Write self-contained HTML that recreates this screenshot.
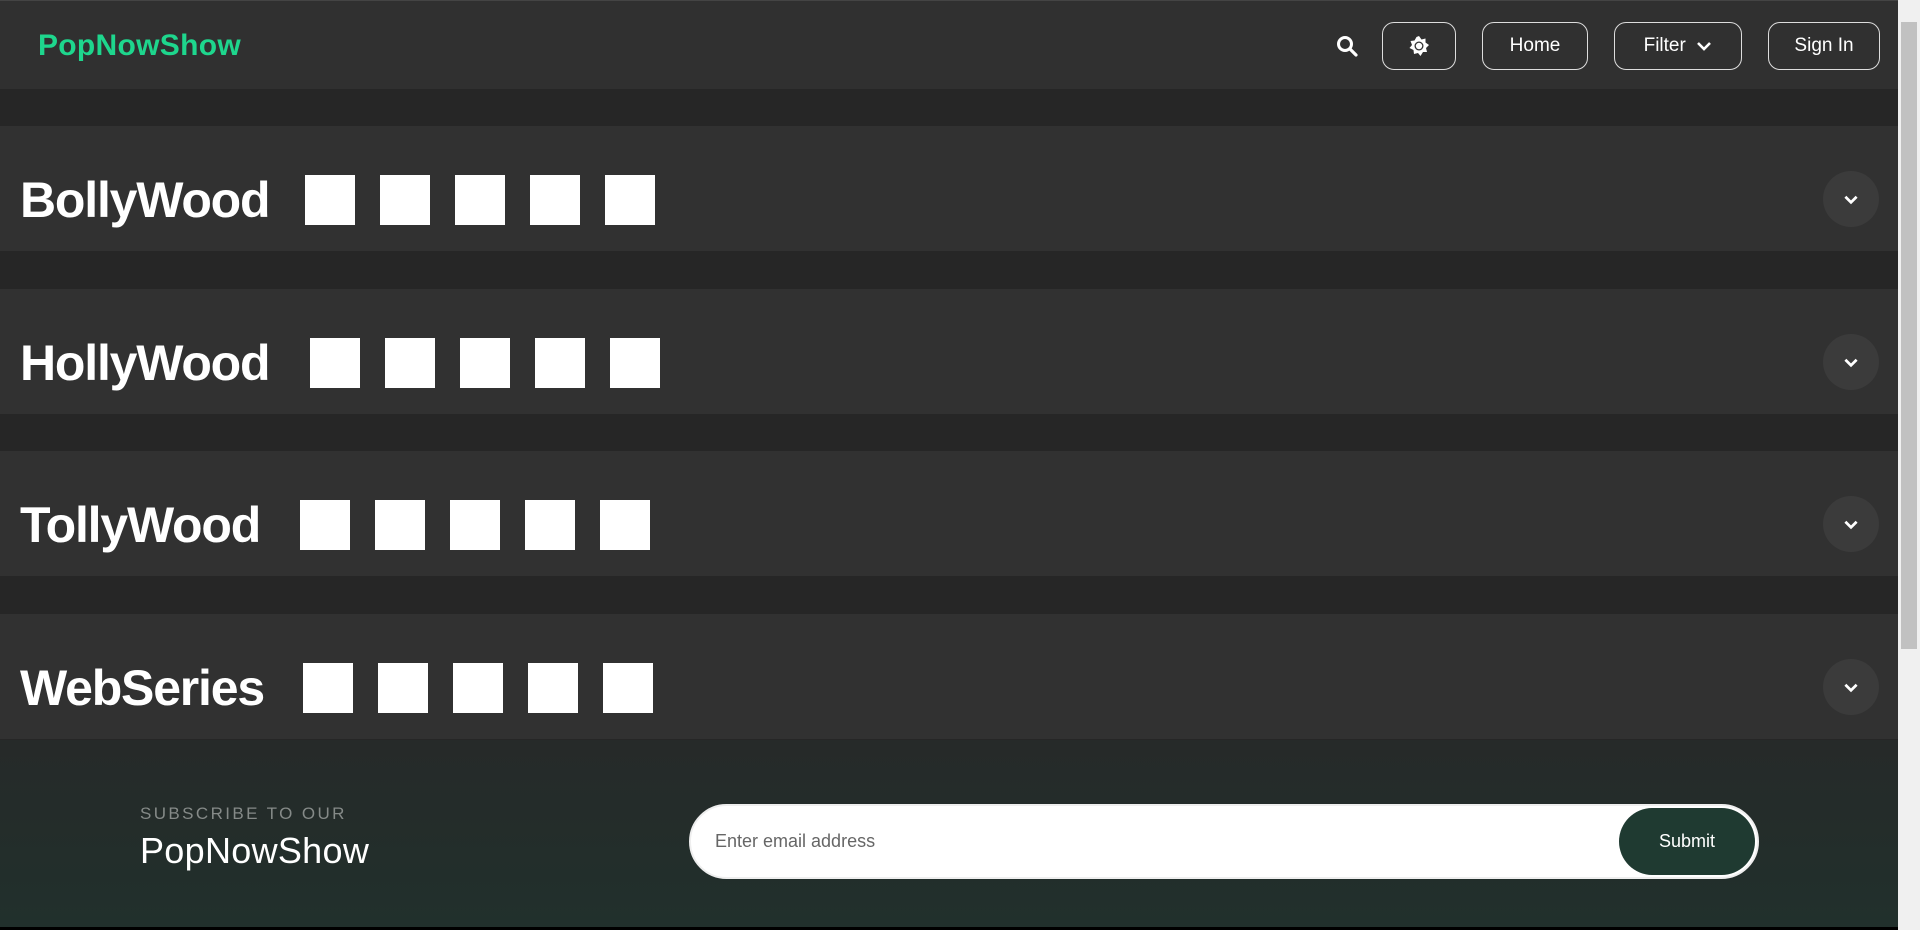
<!DOCTYPE html>
<html><head><style>
*{box-sizing:border-box;margin:0;padding:0}
body{width:1920px;height:930px;overflow:hidden;background:#262626;font-family:"Liberation Sans",sans-serif;position:relative;color:#fff}
.hdr{position:absolute;left:0;top:0;width:1898px;height:89px;background:#303030;border-top:1px solid #444}
.logo{position:absolute;left:38px;top:28px;font-size:30px;font-weight:bold;color:#1ed68d;letter-spacing:0.3px}
.btn{position:absolute;top:21px;height:48px;border:1.5px solid #ddd;border-radius:12px;display:flex;align-items:center;justify-content:center;font-size:19px;color:#fff}
.sec{position:absolute;left:0;width:1898px;height:125px;background:#313131}
.sec h2{position:absolute;left:20px;top:45px;font-size:50px;font-weight:bold;letter-spacing:-1.2px}
.sq{position:absolute;top:49px;width:50px;height:50px;background:#fff}
.chev{position:absolute;left:1823px;top:45px;width:56px;height:56px;border-radius:50%;background:#3b3b3b;display:flex;align-items:center;justify-content:center}
.foot{position:absolute;left:0;top:740px;width:1898px;height:187px;background:linear-gradient(180deg,#262a29,#21302c)}
.sb{position:absolute;left:1898px;top:0;width:22px;height:930px;background:#f0f0f0}
</style></head><body>
<div class="hdr">
<div class="logo">PopNowShow</div>
<svg style="position:absolute;left:1336px;top:34px" width="22" height="22" viewBox="0 0 22 22"><circle cx="9" cy="9" r="6.5" fill="none" stroke="#fff" stroke-width="3"/><line x1="14" y1="14" x2="20" y2="20" stroke="#fff" stroke-width="3.2" stroke-linecap="round"/></svg>
<div class="btn" style="left:1382px;width:74px"><svg width="22" height="22" viewBox="0 0 22 22"><polygon fill="#fff" points="11,1 13.5,4.5 17.5,3.5 17.5,7.5 21,10 18,13 19,17 15,17 12.5,21 10,18 6,19 5.5,15 1.5,13 4,10 2.5,6 6.5,5.5 8.5,2"/><circle cx="11" cy="11" r="4.5" fill="#303030"/><circle cx="11" cy="11" r="3.2" fill="#fff"/></svg></div>
<div class="btn" style="left:1482px;width:106px">Home</div>
<div class="btn" style="left:1614px;width:128px">Filter&nbsp;&nbsp;<svg width="16" height="12" viewBox="0 0 16 12"><path d="M2 3l6 6 6-6" fill="none" stroke="#fff" stroke-width="2.6"/></svg></div>
<div class="btn" style="left:1768px;width:112px">Sign In</div>
</div>

<div class="sec" style="top:126px"><h2>BollyWood</h2>
<div class="sq" style="left:305px"></div><div class="sq" style="left:380px"></div><div class="sq" style="left:455px"></div><div class="sq" style="left:530px"></div><div class="sq" style="left:605px"></div>
<div class="chev"><svg width="18" height="14" viewBox="0 0 16 12"><path d="M3 4l5 5 5-5" fill="none" stroke="#fff" stroke-width="2.4"/></svg></div></div>

<div class="sec" style="top:289px"><h2>HollyWood</h2>
<div class="sq" style="left:310px"></div><div class="sq" style="left:385px"></div><div class="sq" style="left:460px"></div><div class="sq" style="left:535px"></div><div class="sq" style="left:610px"></div>
<div class="chev"><svg width="18" height="14" viewBox="0 0 16 12"><path d="M3 4l5 5 5-5" fill="none" stroke="#fff" stroke-width="2.4"/></svg></div></div>

<div class="sec" style="top:451px"><h2>TollyWood</h2>
<div class="sq" style="left:300px"></div><div class="sq" style="left:375px"></div><div class="sq" style="left:450px"></div><div class="sq" style="left:525px"></div><div class="sq" style="left:600px"></div>
<div class="chev"><svg width="18" height="14" viewBox="0 0 16 12"><path d="M3 4l5 5 5-5" fill="none" stroke="#fff" stroke-width="2.4"/></svg></div></div>

<div class="sec" style="top:614px"><h2>WebSeries</h2>
<div class="sq" style="left:303px"></div><div class="sq" style="left:378px"></div><div class="sq" style="left:453px"></div><div class="sq" style="left:528px"></div><div class="sq" style="left:603px"></div>
<div class="chev"><svg width="18" height="14" viewBox="0 0 16 12"><path d="M3 4l5 5 5-5" fill="none" stroke="#fff" stroke-width="2.4"/></svg></div></div>

<div class="foot">
<div style="position:absolute;left:140px;top:64px;font-size:17px;letter-spacing:2.4px;color:#858a88">SUBSCRIBE TO OUR</div>
<div style="position:absolute;left:140px;top:90px;font-size:36px;color:#fff;letter-spacing:0.3px">PopNowShow</div>
<div style="position:absolute;left:689px;top:64px;width:1070px;height:75px;background:#fff;border-radius:38px;border:2px solid #eee">
<div style="position:absolute;left:24px;top:25px;font-size:18px;color:#666">Enter email address</div>
<div style="position:absolute;right:2px;top:2px;width:136px;height:67px;border-radius:34px;background:#1f3a31;color:#fff;font-size:18px;display:flex;align-items:center;justify-content:center">Submit</div>
</div>
</div>
<div style="position:absolute;left:0;top:927px;width:1920px;height:3px;background:#000"></div>
<div class="sb"><div style="position:absolute;left:3px;top:22px;width:16px;height:627px;background:#c1c1c1"></div></div>
</body></html>
